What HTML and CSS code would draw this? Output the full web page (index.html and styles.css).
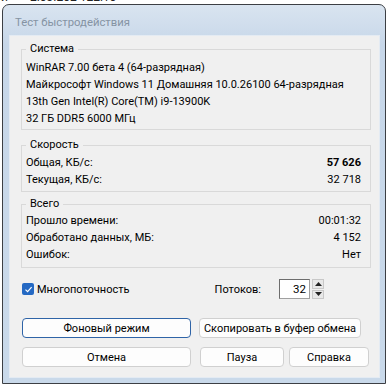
FILE: index.html
```html
<!DOCTYPE html>
<html lang="ru">
<head>
    <meta charset="UTF-8">
    <title>Тест быстродействия</title>
    <link rel="stylesheet" href="styles.css">
</head>
<body>
    <div class="desk-strip">
        <span class="desk-a">и</span>
        <span class="desk-b">2.03.202 122:10</span>
    </div>

    <div class="window">
        <div class="title-bar">Тест быстродействия</div>

        <div class="client">
            <fieldset class="group group-system">
                <legend>Система</legend>
                <div class="line">WinRAR 7.00 бета 4 (64-разрядная)</div>
                <div class="line">Майкрософт Windows 11 Домашняя 10.0.26100 64-разрядная</div>
                <div class="line">13th Gen Intel(R) Core(TM) i9-13900K</div>
                <div class="line">32 ГБ DDR5 6000 МГц</div>
            </fieldset>

            <fieldset class="group group-speed">
                <legend>Скорость</legend>
                <div class="line row"><span>Общая, КБ/с:</span><span class="val-bold">57 626</span></div>
                <div class="line row"><span>Текущая, КБ/с:</span><span>32 718</span></div>
            </fieldset>

            <fieldset class="group group-total">
                <legend>Всего</legend>
                <div class="line row"><span>Прошло времени:</span><span>00:01:32</span></div>
                <div class="line row"><span>Обработано данных, МБ:</span><span>4 152</span></div>
                <div class="line row"><span>Ошибок:</span><span>Нет</span></div>
            </fieldset>

            <div class="options">
                <label class="check">
                    <span class="check-box">
                        <svg width="9" height="9" viewBox="0 0 9 9"><path d="M1.5 4.6 L3.6 6.6 L7.6 2.2" fill="none" stroke="#fff" stroke-width="1.2"/></svg>
                    </span>
                    Многопоточность
                </label>
                <div class="threads">
                    <span class="threads-label">Потоков:</span>
                    <div class="spin-value">32</div>
                    <div class="spin-arrows">
                        <span class="arrow"><svg width="7" height="4" viewBox="0 0 7 4"><path d="M3.5 0 L7 4 L0 4 Z" fill="#222"/></svg></span>
                        <span class="arrow"><svg width="7" height="4" viewBox="0 0 7 4"><path d="M0 0 L7 0 L3.5 4 Z" fill="#222"/></svg></span>
                    </div>
                </div>
            </div>

            <div class="buttons">
                <div class="btn-row">
                    <button class="btn btn-wide btn-focus">Фоновый режим</button>
                    <button class="btn btn-copy">Скопировать в буфер обмена</button>
                </div>
                <div class="btn-row">
                    <button class="btn btn-wide">Отмена</button>
                    <button class="btn btn-pause">Пауза</button>
                    <button class="btn btn-help">Справка</button>
                </div>
            </div>
        </div>
    </div>
</body>
</html>
```

FILE: styles.css
```css
* {
    margin: 0;
    padding: 0;
    box-sizing: border-box;
}

body {
    background-color: #fff;
    font-family: Roboto, "Liberation Sans", sans-serif;
    font-size: 11px;
    color: #000;
    width: 390px;
    height: 388px;
    overflow: hidden;
    white-space: nowrap;
}

.desk-strip {
    height: 4px;
    overflow: hidden;
    display: flex;
    font-size: 12px;
    line-height: 14px;
    color: #222;
}

.desk-strip span {
    margin-top: -10px;
}

.desk-a {
    margin-left: 1px;
}

.desk-b {
    margin-left: 22px;
}

.window {
    width: 384px;
    height: 380px;
    margin-left: 2px;
    border: 1px solid #3c3f44;
    border-radius: 7px 7px 0 0;
    background: linear-gradient(#d9e4f0, #c7d7e9 40px, #c9d9ea);
    display: flex;
    flex-direction: column;
    padding: 0 5px 5px 6px;
}

.title-bar {
    height: 30px;
    padding: 10px 0 0 6px;
    font-size: 11.3px;
    line-height: 15px;
    color: #8593a3;
}

.client {
    flex: 1;
    background-color: #f0f0f0;
    border: 1px solid #e4ebf3;
    padding: 5px 8px 0 11px;
    display: flex;
    flex-direction: column;
}

.group {
    border: 1px solid #d9d9d9;
    padding: 0 9px 4px 4px;
    line-height: 17px;
}

.group legend {
    padding: 0 4px;
    line-height: 16px;
}

.group-system {
    padding-top: 2px;
    padding-bottom: 2px;
}

.group-speed {
    margin-top: 7px;
    padding-top: 1px;
    padding-bottom: 3px;
}

.group-total {
    margin-top: 4px;
}

.row {
    display: flex;
    justify-content: space-between;
}

.val-bold {
    font-weight: bold;
}

.options {
    margin-top: 10px;
    height: 22px;
    display: flex;
    align-items: center;
    justify-content: space-between;
    padding-right: 47px;
}

.check {
    display: flex;
    align-items: center;
    gap: 3px;
}

.check-box {
    width: 12px;
    height: 12px;
    margin-left: 1px;
    border-radius: 2px;
    background-color: #2569c3;
    display: flex;
    align-items: center;
    justify-content: center;
}

.threads {
    display: flex;
    align-items: center;
}

.threads-label {
    margin-right: 18px;
}

.spin-value {
    width: 31px;
    height: 20px;
    background-color: #fff;
    border: 1px solid #a0a0a0;
    border-top-color: #6d6d6d;
    border-left-color: #6d6d6d;
    text-align: right;
    padding-right: 3px;
    line-height: 18px;
    font-size: 11.5px;
}

.spin-arrows {
    margin-left: 2px;
    width: 12px;
    height: 20px;
    display: flex;
    flex-direction: column;
    gap: 1px;
}

.arrow {
    flex: 1;
    background-color: #e8e8e8;
    border: 1px solid #c8c8c8;
    display: flex;
    align-items: center;
    justify-content: center;
}

.buttons {
    margin-top: 18px;
    display: flex;
    flex-direction: column;
    gap: 9px;
}

.btn-row {
    display: flex;
}

.btn {
    height: 20px;
    font-family: inherit;
    font-size: 11px;
    color: #000;
    background-color: #fdfdfd;
    border: 1px solid #d0d0d0;
    border-radius: 4px;
    white-space: nowrap;
}

.btn-wide {
    width: 169px;
    margin-left: 1px;
}

.btn-focus {
    border-color: #2f64a7;
}

.btn-copy {
    width: 162px;
    margin-left: 8px;
}

.btn-pause {
    width: 84px;
    margin-left: 9px;
}

.btn-help {
    width: 80px;
    margin-left: 5px;
}
```
